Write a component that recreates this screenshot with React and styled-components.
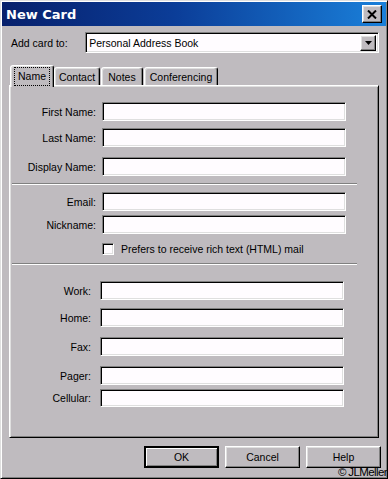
import React from "react";
import styled, { createGlobalStyle, css } from "styled-components";

const BG = "#bfbbbf";

const GlobalStyle = createGlobalStyle`
  html, body { margin: 0; padding: 0; background: ${BG}; }
  body { font-family: "Liberation Sans", Arial, sans-serif; font-size: 10.5px; color: #000; }
  * { box-sizing: border-box; }
`;

const raised = css`
  border: 1px solid;
  border-color: #fff #000 #000 #fff;
  box-shadow: inset -1px -1px #808080, inset 1px 1px #dfdfdf;
  background: ${BG};
`;

const sunken = css`
  border: 1px solid;
  border-color: #808080 #fff #fff #808080;
  box-shadow: inset 1px 1px #000, inset -1px -1px #dfdfdf;
  background: #fffcff;
`;

const Window = styled.div`
  position: relative;
  width: 388px;
  height: 479px;
  overflow: hidden;
  background: ${BG};
  border: 1px solid;
  border-color: #dfdfdf #000 #000 #dfdfdf;
  box-shadow: inset 1px 1px #fff, inset -1px -1px #808080;
  padding: 1px;
  display: flex;
  flex-direction: column;
`;

const TitleBar = styled.div`
  height: 24px;
  display: flex;
  align-items: center;
  justify-content: space-between;
  padding: 0 4px 0 4px;
  background: linear-gradient(to right, #07206c 0%, #0b3d98 45%, #1a80da 100%);
`;

const Title = styled.span`
  font-family: "DejaVu Sans", Verdana, sans-serif;
  font-weight: bold;
  font-size: 13px;
  color: #fff;
`;

const CloseButton = styled.div`
  ${raised};
  width: 20px;
  height: 18px;
  display: flex;
  align-items: center;
  justify-content: center;
`;

const Body = styled.div`
  flex: 1;
  display: flex;
  flex-direction: column;
  padding: 6px 7px 0 7px;
`;

const TopRow = styled.div`
  display: flex;
  align-items: center;
  height: 21px;
`;

const TopLabel = styled.span`
  width: 77px;
  padding-left: 2px;
`;

const Select = styled.div`
  ${sunken};
  width: 297px;
  height: 21px;
  display: flex;
  align-items: center;
  justify-content: space-between;
  padding: 2px 2px 2px 3px;
`;

const DropButton = styled.div`
  ${raised};
  width: 16px;
  height: 16px;
  display: flex;
  align-items: center;
  justify-content: center;
`;

const TabStrip = styled.div`
  display: flex;
  align-items: flex-end;
  height: 20px;
  margin-top: 12px;
  padding-left: 1px;
  position: relative;
  z-index: 2;
`;

const Tab = styled.div`
  width: ${(p) => p.$w}px;
  height: ${(p) => (p.$active ? 22 : 18)}px;
  margin-bottom: ${(p) => (p.$active ? -2 : 0)}px;
  margin-right: ${(p) => p.$mr || 0}px;
  background: ${BG};
  border: 1px solid;
  border-bottom: none;
  border-color: #fff #000 transparent #fff;
  border-radius: 3px 3px 0 0;
  box-shadow: inset -1px 0 #808080, inset 1px 1px #dfdfdf;
  display: flex;
  align-items: ${(p) => (p.$active ? "flex-start" : "center")};
  justify-content: center;
  padding-top: ${(p) => (p.$active ? 2 : 0)}px;
`;

const FocusText = styled.span`
  outline: 1px dotted #000;
  outline-offset: 0;
  padding: 2px 3px 3px 3px;
  line-height: 12px;
`;

const Panel = styled.div`
  width: 370px;
  height: 353px;
  border: 1px solid;
  border-color: #fff #000 #000 #fff;
  box-shadow: inset 1px 1px #dfdfdf, inset -1px -1px #808080;
  display: flex;
  flex-direction: column;
  padding-top: 16px;
`;

const Row = styled.div`
  display: flex;
  align-items: center;
  margin-top: ${(p) => p.$mt || 0}px;
  gap: ${(p) => p.$gap}px;
`;

const Label = styled.span`
  width: ${(p) => p.$w}px;
  text-align: right;
`;

const Input = styled.div`
  ${sunken};
  width: 244px;
  height: ${(p) => p.$h || 19}px;
`;

const Separator = styled.div`
  margin: ${(p) => p.$mt}px 0 0 2px;
  width: 345px;
  height: 2px;
  border-top: 1px solid #808080;
  border-bottom: 1px solid #fff;
`;

const CheckRow = styled.div`
  display: flex;
  align-items: center;
  gap: 7px;
  margin-top: 9px;
  padding-left: 92px;
  height: 12px;
`;

const CheckBox = styled.div`
  ${sunken};
  width: 12px;
  height: 12px;
`;

const ButtonRow = styled.div`
  display: flex;
  justify-content: flex-end;
  gap: 6px;
  margin-top: 8px;
  width: 372px;
`;

const Button = styled.div`
  ${raised};
  width: 75px;
  height: 22px;
  display: flex;
  align-items: center;
  justify-content: center;
  ${(p) =>
    p.$default &&
    css`
      border: 2px solid #000;
      box-shadow: inset 1px 1px #fff, inset -1px -1px #808080;
    `}
`;

const Copyright = styled.span`
  position: absolute;
  right: 0;
  bottom: 0;
  font-size: 11.5px;
  line-height: 11px;
  letter-spacing: -0.6px;
  color: #000;
`;

const nameFields = [
  { label: "First Name:", mt: 0 },
  { label: "Last Name:", mt: 7 },
  { label: "Display Name:", mt: 10 },
];

const phoneFields = [
  { label: "Work:", mt: 16 },
  { label: "Home:", mt: 8 },
  { label: "Fax:", mt: 10 },
  { label: "Pager:", mt: 10 },
  { label: "Cellular:", mt: 4, h: 18 },
];

export default function App() {
  return (
    <>
      <GlobalStyle />
      <Window>
        <TitleBar>
          <Title>New Card</Title>
          <CloseButton>
            <svg width="10" height="9" viewBox="0 0 10 9">
              <path d="M1 0.5 L9 8.5 M9 0.5 L1 8.5" stroke="#000" strokeWidth="2" />
            </svg>
          </CloseButton>
        </TitleBar>
        <Body>
          <TopRow>
            <TopLabel>Add card to:</TopLabel>
            <Select>
              <span>Personal Address Book</span>
              <DropButton>
                <svg width="7" height="4" viewBox="0 0 7 4">
                  <path d="M0 0 H7 L3.5 4 Z" fill="#000" />
                </svg>
              </DropButton>
            </Select>
          </TopRow>
          <TabStrip>
            <Tab $w={44} $active>
              <FocusText>Name</FocusText>
            </Tab>
            <Tab $w={46} $mr={1}>Contact</Tab>
            <Tab $w={42} $mr={1}>Notes</Tab>
            <Tab $w={74}>Conferencing</Tab>
          </TabStrip>
          <Panel>
            {nameFields.map((f) => (
              <Row key={f.label} $mt={f.mt} $gap={6}>
                <Label $w={86}>{f.label}</Label>
                <Input />
              </Row>
            ))}
            <Separator $mt={7} />
            <Row $mt={7} $gap={6}>
              <Label $w={86}>Email:</Label>
              <Input />
            </Row>
            <Row $mt={4} $gap={6}>
              <Label $w={86}>Nickname:</Label>
              <Input />
            </Row>
            <CheckRow>
              <CheckBox />
              <span>Prefers to receive rich text (HTML) mail</span>
            </CheckRow>
            <Separator $mt={8} />
            {phoneFields.map((f) => (
              <Row key={f.label} $mt={f.mt} $gap={9}>
                <Label $w={81}>{f.label}</Label>
                <Input $h={f.h} />
              </Row>
            ))}
          </Panel>
          <ButtonRow>
            <Button $default>OK</Button>
            <Button>Cancel</Button>
            <Button>Help</Button>
          </ButtonRow>
        </Body>
        <Copyright>© JLMeller</Copyright>
      </Window>
    </>
  );
}
